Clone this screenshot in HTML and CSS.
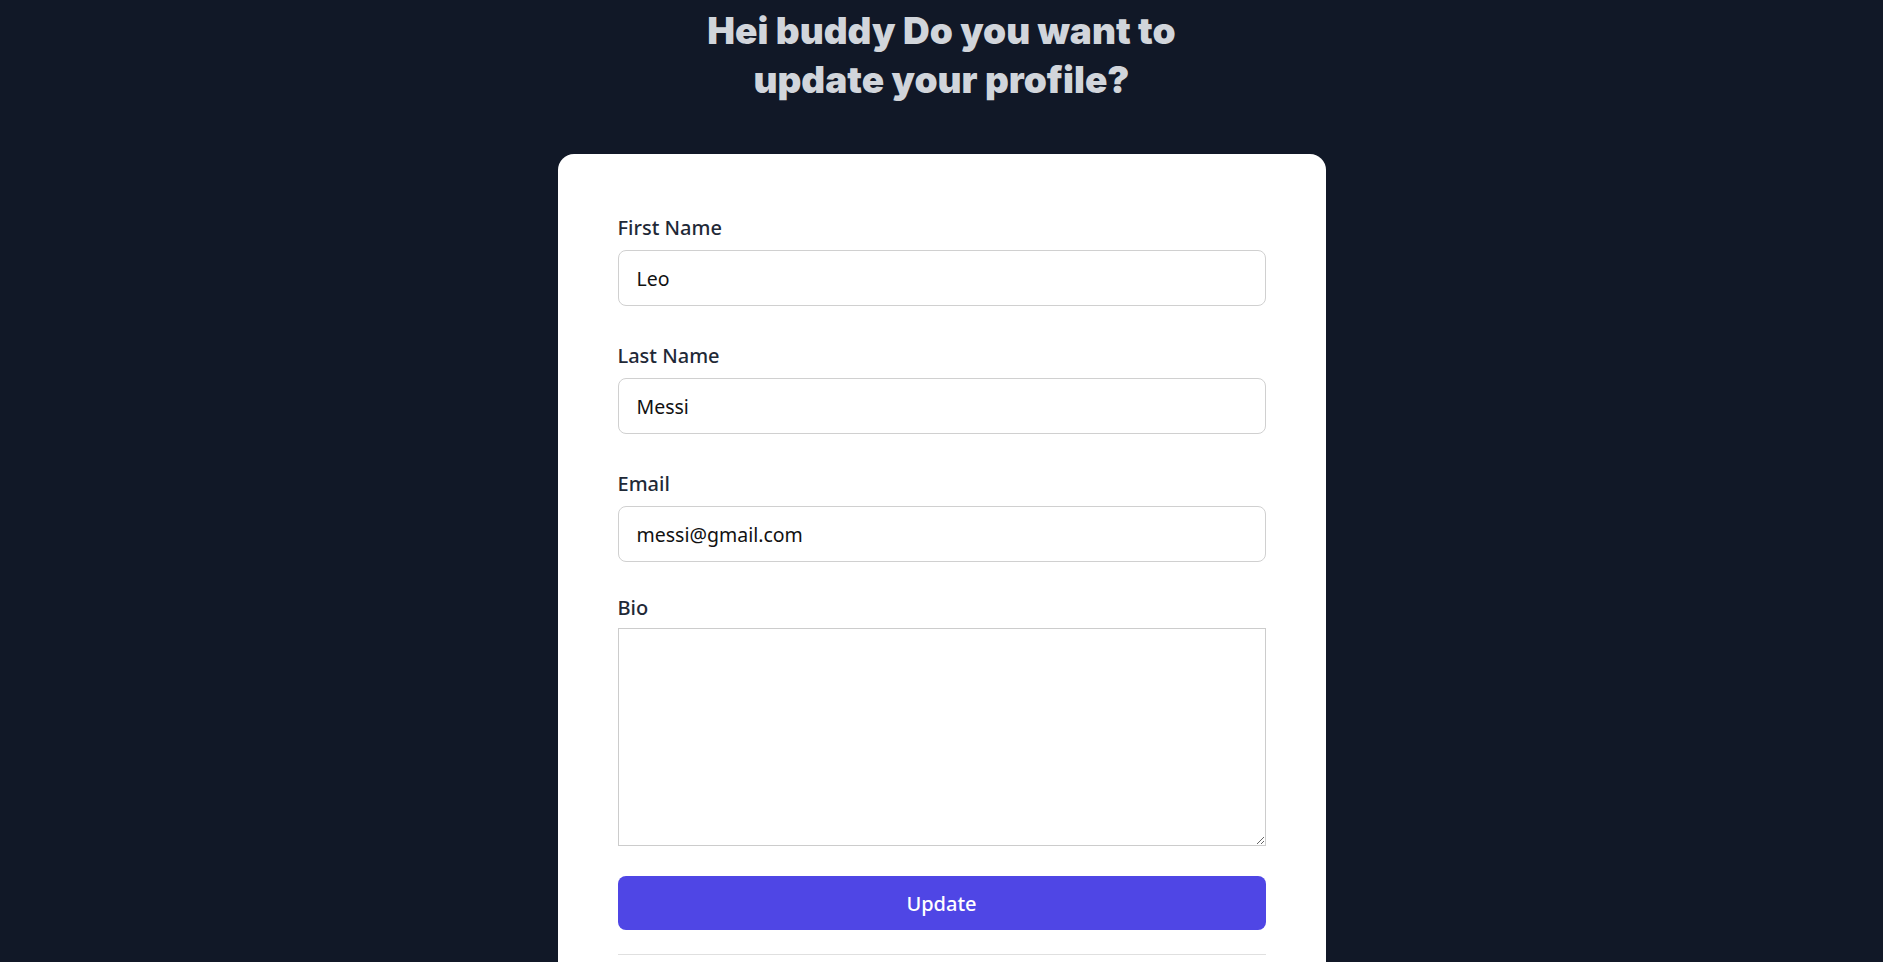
FILE: index.html
```html
<!DOCTYPE html>
<html lang="en">
<head>
<meta charset="utf-8">
<title>Update profile</title>
<link rel="stylesheet" href="styles.css">
</head>
<body>
<main class="page">
  <h1 class="title">Hei buddy Do you want to<br>update your profile?</h1>
  <section class="card">
    <form class="form">
      <div class="field">
        <label class="label" for="first">First Name</label>
        <input class="input" id="first" type="text" value="Leo">
      </div>
      <div class="field">
        <label class="label" for="last">Last Name</label>
        <input class="input" id="last" type="text" value="Messi">
      </div>
      <div class="field">
        <label class="label" for="email">Email</label>
        <input class="input" id="email" type="email" value="messi@gmail.com">
      </div>
      <div class="field field-bio">
        <label class="label label-bio" for="bio">Bio</label>
        <textarea class="textarea" id="bio"></textarea>
      </div>
      <button class="button" type="button">Update</button>
      <hr class="divider">
    </form>
  </section>
</main>
</body>
</html>
```

FILE: styles.css
```css
html, body {
  margin: 0;
  padding: 0;
  background: #111827;
}

body {
  font-family: "Noto Sans", "Open Sans", sans-serif;
  min-height: 100vh;
}

.page {
  display: flex;
  flex-direction: column;
  align-items: center;
}

.title {
  margin: 0;
  padding-top: 6px;
  font-family: Inter, "Noto Sans", sans-serif;
  font-weight: 900;
  font-size: 37px;
  line-height: 49px;
  color: #d1d5db;
  text-align: center;
}

.card {
  box-sizing: border-box;
  width: 768px;
  margin-top: 50px;
  padding: 60px 60px 40px;
  background: #ffffff;
  border-radius: 16px;
  min-height: 900px;
}

.form {
  display: flex;
  flex-direction: column;
}

.field {
  display: flex;
  flex-direction: column;
  margin-bottom: 36px;
}

.field-bio {
  margin-top: -4px;
  margin-bottom: 30px;
}

.label {
  font-size: 20px;
  line-height: 28px;
  font-weight: 500;
  color: #1f2937;
  margin-bottom: 8px;
}

.label-bio {
  margin-bottom: 6px;
}

.input {
  box-sizing: border-box;
  height: 56px;
  width: 100%;
  padding: 0 18px;
  border: 1px solid #d0d0d0;
  border-radius: 8px;
  font-family: inherit;
  font-size: 19.5px;
  color: #111111;
  background: #ffffff;
  outline: none;
}

.textarea {
  box-sizing: border-box;
  display: block;
  width: 100%;
  height: 218px;
  margin: 0;
  border: 1px solid #cccccc;
  border-radius: 0;
  font-family: inherit;
  font-size: 20px;
  background: #ffffff;
  outline: none;
}

.button {
  height: 54px;
  width: 100%;
  border: none;
  border-radius: 8px;
  background: #4f46e5;
  color: #ffffff;
  font-family: inherit;
  font-size: 20px;
  font-weight: 500;
  cursor: pointer;
}

.divider {
  margin: 24px 0 0;
  border: none;
  border-top: 1px solid #e0e0e0;
  height: 0;
}
```
